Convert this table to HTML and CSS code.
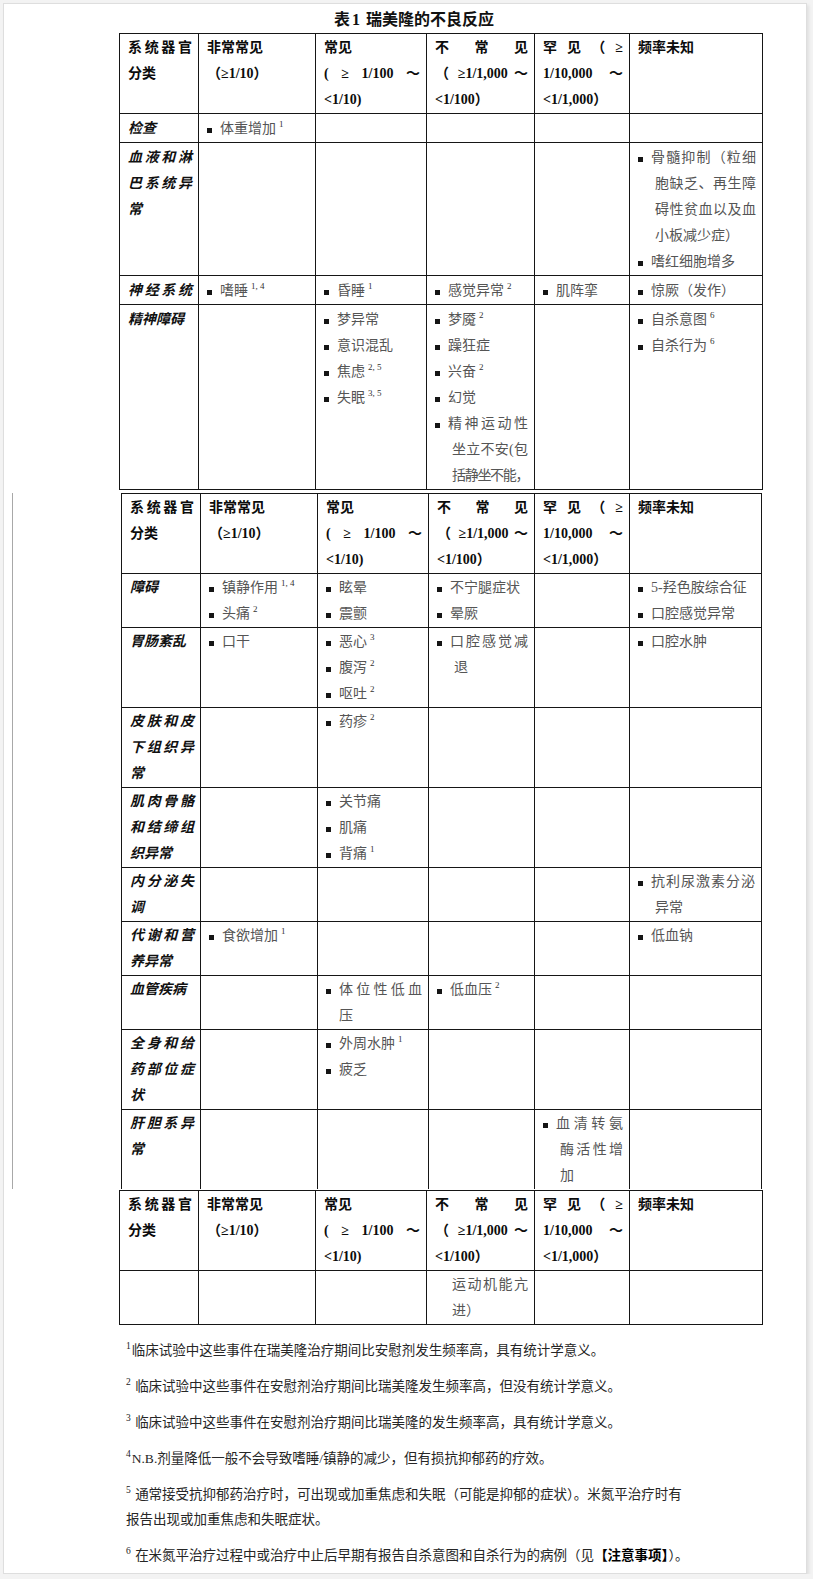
FILE: index.html
```html
<!DOCTYPE html>
<html lang="zh-CN">
<head>
<meta charset="utf-8">
<title>表1 瑞美隆的不良反应</title>
<link rel="stylesheet" href="styles.css">
</head>
<body>
<div class="page">
  <div class="title">表<span class="lat">1</span> 瑞美隆的不良反应</div>

  <table class="tbl t1">
    <colgroup><col class="c1"><col class="c2"><col class="c3"><col class="c4"><col class="c5"><col class="c6"></colgroup>
    <tr class="hd">
      <td><span class="ln j">系统器官</span><span class="ln">分类</span></td>
      <td><span class="ln">非常常见</span><span class="ln">（≥1/10）</span></td>
      <td><span class="ln">常见</span><span class="ln j">( ≥ 1/100 ～</span><span class="ln">&lt;1/10)</span></td>
      <td><span class="ln j">不 常 见</span><span class="ln j">（ ≥1/1,000 ～</span><span class="ln">&lt;1/100）</span></td>
      <td><span class="ln j">罕 见 （ ≥</span><span class="ln j">1/10,000 ～</span><span class="ln">&lt;1/1,000）</span></td>
      <td><span class="ln">频率未知</span></td>
    </tr>
    <tr>
      <td class="cat"><span class="ln">检查</span></td>
      <td><div class="it"><i class="b"></i><div class="t">体重增加<sup>1</sup></div></div></td>
      <td></td><td></td><td></td><td></td>
    </tr>
    <tr>
      <td class="cat"><span class="ln j">血液和淋</span><span class="ln j">巴系统异</span><span class="ln">常</span></td>
      <td></td><td></td><td></td><td></td>
      <td>
        <div class="it"><i class="b"></i><div class="t"><span class="ln j">骨髓抑制（粒细</span><span class="ln j c">胞缺乏、再生障</span><span class="ln j c">碍性贫血以及血</span><span class="ln c">小板减少症）</span></div></div>
        <div class="it"><i class="b"></i><div class="t">嗜红细胞增多</div></div>
      </td>
    </tr>
    <tr>
      <td class="cat"><span class="ln j">神经系统</span></td>
      <td><div class="it"><i class="b"></i><div class="t">嗜睡<sup>1, 4</sup></div></div></td>
      <td><div class="it"><i class="b"></i><div class="t">昏睡<sup>1</sup></div></div></td>
      <td><div class="it"><i class="b"></i><div class="t">感觉异常<sup>2</sup></div></div></td>
      <td><div class="it"><i class="b"></i><div class="t">肌阵挛</div></div></td>
      <td><div class="it"><i class="b"></i><div class="t">惊厥（发作）</div></div></td>
    </tr>
    <tr>
      <td class="cat"><span class="ln">精神障碍</span></td>
      <td></td>
      <td>
        <div class="it"><i class="b"></i><div class="t">梦异常</div></div>
        <div class="it"><i class="b"></i><div class="t">意识混乱</div></div>
        <div class="it"><i class="b"></i><div class="t">焦虑<sup>2, 5</sup></div></div>
        <div class="it"><i class="b"></i><div class="t">失眠<sup>3, 5</sup></div></div>
      </td>
      <td>
        <div class="it"><i class="b"></i><div class="t">梦魇<sup>2</sup></div></div>
        <div class="it"><i class="b"></i><div class="t">躁狂症</div></div>
        <div class="it"><i class="b"></i><div class="t">兴奋<sup>2</sup></div></div>
        <div class="it"><i class="b"></i><div class="t">幻觉</div></div>
        <div class="it"><i class="b"></i><div class="t"><span class="ln j">精神运动性</span><span class="ln j c">坐立不安(包</span><span class="ln j c tight">括静坐不能，</span></div></div>
      </td>
      <td></td>
      <td>
        <div class="it"><i class="b"></i><div class="t">自杀意图<sup>6</sup></div></div>
        <div class="it"><i class="b"></i><div class="t">自杀行为<sup>6</sup></div></div>
      </td>
    </tr>
  </table>

  <div class="sec2">
    <table class="tbl t2">
      <colgroup><col class="c1"><col class="c2"><col class="c3"><col class="c4"><col class="c5"><col class="c6"></colgroup>
      <tr class="hd">
        <td><span class="ln j">系统器官</span><span class="ln">分类</span></td>
        <td><span class="ln">非常常见</span><span class="ln">（≥1/10）</span></td>
        <td><span class="ln">常见</span><span class="ln j">( ≥ 1/100 ～</span><span class="ln">&lt;1/10)</span></td>
        <td><span class="ln j">不 常 见</span><span class="ln j">（ ≥1/1,000 ～</span><span class="ln">&lt;1/100）</span></td>
        <td><span class="ln j">罕 见 （ ≥</span><span class="ln j">1/10,000 ～</span><span class="ln">&lt;1/1,000）</span></td>
        <td><span class="ln">频率未知</span></td>
      </tr>
      <tr>
        <td class="cat"><span class="ln">障碍</span></td>
        <td>
          <div class="it"><i class="b"></i><div class="t">镇静作用<sup>1, 4</sup></div></div>
          <div class="it"><i class="b"></i><div class="t">头痛<sup>2</sup></div></div>
        </td>
        <td>
          <div class="it"><i class="b"></i><div class="t">眩晕</div></div>
          <div class="it"><i class="b"></i><div class="t">震颤</div></div>
        </td>
        <td>
          <div class="it"><i class="b"></i><div class="t">不宁腿症状</div></div>
          <div class="it"><i class="b"></i><div class="t">晕厥</div></div>
        </td>
        <td></td>
        <td>
          <div class="it"><i class="b"></i><div class="t">5-羟色胺综合征</div></div>
          <div class="it"><i class="b"></i><div class="t">口腔感觉异常</div></div>
        </td>
      </tr>
      <tr>
        <td class="cat"><span class="ln">胃肠紊乱</span></td>
        <td><div class="it"><i class="b"></i><div class="t">口干</div></div></td>
        <td>
          <div class="it"><i class="b"></i><div class="t">恶心<sup>3</sup></div></div>
          <div class="it"><i class="b"></i><div class="t">腹泻<sup>2</sup></div></div>
          <div class="it"><i class="b"></i><div class="t">呕吐<sup>2</sup></div></div>
        </td>
        <td><div class="it"><i class="b"></i><div class="t"><span class="ln j">口腔感觉减</span><span class="ln c">退</span></div></div></td>
        <td></td>
        <td><div class="it"><i class="b"></i><div class="t">口腔水肿</div></div></td>
      </tr>
      <tr>
        <td class="cat"><span class="ln j">皮肤和皮</span><span class="ln j">下组织异</span><span class="ln">常</span></td>
        <td></td>
        <td><div class="it"><i class="b"></i><div class="t">药疹<sup>2</sup></div></div></td>
        <td></td><td></td><td></td>
      </tr>
      <tr>
        <td class="cat"><span class="ln j">肌肉骨骼</span><span class="ln j">和结缔组</span><span class="ln">织异常</span></td>
        <td></td>
        <td>
          <div class="it"><i class="b"></i><div class="t">关节痛</div></div>
          <div class="it"><i class="b"></i><div class="t">肌痛</div></div>
          <div class="it"><i class="b"></i><div class="t">背痛<sup>1</sup></div></div>
        </td>
        <td></td><td></td><td></td>
      </tr>
      <tr>
        <td class="cat"><span class="ln j">内分泌失</span><span class="ln">调</span></td>
        <td></td><td></td><td></td><td></td>
        <td><div class="it"><i class="b"></i><div class="t"><span class="ln j">抗利尿激素分泌</span><span class="ln c">异常</span></div></div></td>
      </tr>
      <tr>
        <td class="cat"><span class="ln j">代谢和营</span><span class="ln">养异常</span></td>
        <td><div class="it"><i class="b"></i><div class="t">食欲增加<sup>1</sup></div></div></td>
        <td></td><td></td><td></td>
        <td><div class="it"><i class="b"></i><div class="t">低血钠</div></div></td>
      </tr>
      <tr>
        <td class="cat"><span class="ln">血管疾病</span></td>
        <td></td>
        <td><div class="it"><i class="b"></i><div class="t"><span class="ln j">体位性低血</span><span class="ln">压</span></div></div></td>
        <td><div class="it"><i class="b"></i><div class="t">低血压<sup>2</sup></div></div></td>
        <td></td><td></td>
      </tr>
      <tr>
        <td class="cat"><span class="ln j">全身和给</span><span class="ln j">药部位症</span><span class="ln">状</span></td>
        <td></td>
        <td>
          <div class="it"><i class="b"></i><div class="t">外周水肿<sup>1</sup></div></div>
          <div class="it"><i class="b"></i><div class="t">疲乏</div></div>
        </td>
        <td></td><td></td><td></td>
      </tr>
      <tr class="open">
        <td class="cat"><span class="ln j">肝胆系异</span><span class="ln">常</span></td>
        <td></td><td></td><td></td>
        <td><div class="it"><i class="b"></i><div class="t"><span class="ln j">血清转氨</span><span class="ln j c">酶活性增</span><span class="ln c">加</span></div></div></td>
        <td></td>
      </tr>
    </table>
  </div>

  <table class="tbl t3">
    <colgroup><col class="c1"><col class="c2"><col class="c3"><col class="c4"><col class="c5"><col class="c6"></colgroup>
    <tr class="hd">
      <td><span class="ln j">系统器官</span><span class="ln">分类</span></td>
      <td><span class="ln">非常常见</span><span class="ln">（≥1/10）</span></td>
      <td><span class="ln">常见</span><span class="ln j">( ≥ 1/100 ～</span><span class="ln">&lt;1/10)</span></td>
      <td><span class="ln j">不 常 见</span><span class="ln j">（ ≥1/1,000 ～</span><span class="ln">&lt;1/100）</span></td>
      <td><span class="ln j">罕 见 （ ≥</span><span class="ln j">1/10,000 ～</span><span class="ln">&lt;1/1,000）</span></td>
      <td><span class="ln">频率未知</span></td>
    </tr>
    <tr>
      <td></td><td></td><td></td>
      <td><div class="it"><i class="b nb"></i><div class="t"><span class="ln j c">运动机能亢</span><span class="ln c">进）</span></div></div></td>
      <td></td><td></td>
    </tr>
  </table>

  <div class="notes">
    <p><sup>1</sup>临床试验中这些事件在瑞美隆治疗期间比安慰剂发生频率高，具有统计学意义。</p>
    <p><sup>2</sup> 临床试验中这些事件在安慰剂治疗期间比瑞美隆发生频率高，但没有统计学意义。</p>
    <p><sup>3</sup> 临床试验中这些事件在安慰剂治疗期间比瑞美隆的发生频率高，具有统计学意义。</p>
    <p><sup>4</sup>N.B.剂量降低一般不会导致嗜睡/镇静的减少，但有损抗抑郁药的疗效。</p>
    <p><sup>5</sup> 通常接受抗抑郁药治疗时，可出现或加重焦虑和失眠（可能是抑郁的症状）。米氮平治疗时有<br>报告出现或加重焦虑和失眠症状。</p>
    <p><sup>6</sup> 在米氮平治疗过程中或治疗中止后早期有报告自杀意图和自杀行为的病例（见<b>【注意事项】</b>）。</p>
  </div>
</div>
</body>
</html>
```

FILE: styles.css
```css
html, body {
  margin: 0;
  padding: 0;
}

body {
  background: #f3f3f3;
  font-family: "Liberation Serif", "Noto Sans CJK SC", serif;
  color: #222;
}

.page {
  margin: 3px 6px 0 3px;
  height: 1571px;
  box-sizing: border-box;
  background: #fff;
  border: 1px solid #dedede;
  box-shadow: 2px 2px 3px rgba(0, 0, 0, 0.08);
  overflow: hidden;
}

.title {
  height: 29px;
  line-height: 31px;
  text-align: center;
  padding-left: 18px;
  font-size: 16px;
  font-weight: bold;
  color: #111;
}

.tbl {
  border-collapse: collapse;
  table-layout: fixed;
  width: 643px;
}

.t1,
.t3 {
  margin-left: 115px;
}

.t3 {
  margin-top: 1px;
}

.sec2 {
  margin: 3px 0 0 8px;
  padding-left: 108px;
  border-left: 1px solid #a8a8a8;
}

.t2 {
  width: 640px;
}

.c1 { width: 79px; }
.c2 { width: 117px; }
.c3 { width: 111px; }
.c4 { width: 108px; }
.c5 { width: 95px; }
.c6 { width: 133px; }

.t2 .c4 { width: 106px; }
.t2 .c6 { width: 132px; }

.tbl td {
  border: 1px solid #161616;
  vertical-align: top;
  padding: 1px 6px 0 8px;
  line-height: 26px;
  font-size: 14px;
  color: #555;
}

.t1 tr:not(.hd) td {
  padding-top: 2px;
}

.t2 tr.open td {
  border-bottom: none;
}

.hd td {
  font-weight: bold;
  color: #0c0c0c;
}

td.cat {
  font-weight: bold;
  font-style: italic;
  color: #111;
}

.ln {
  display: block;
  white-space: nowrap;
}

.j {
  text-align: justify;
  text-align-last: justify;
}

.c {
  padding-left: 4px;
}

.tight {
  letter-spacing: -1.5px;
}

.it {
  display: flex;
  align-items: flex-start;
}

.b {
  flex: none;
  width: 5px;
  height: 5px;
  margin: 12px 8px 0 0;
  background: #151515;
}

.b.nb {
  background: transparent;
}

.t {
  flex: 1;
  min-width: 0;
}

sup {
  font-family: "Liberation Serif", serif;
  font-size: 9px;
  line-height: 0;
  vertical-align: 6px;
  margin-left: 3px;
  color: #333;
}

.notes {
  margin-top: 13px;
  padding-left: 122px;
}

.notes p {
  margin: 0 0 11px;
  font-size: 13.5px;
  line-height: 25px;
  color: #262626;
}

.notes sup {
  margin-left: 0;
  margin-right: 1px;
  font-size: 9.5px;
  color: #222;
}

.notes b {
  color: #000;
}

.lat {
  font-family: "Liberation Serif", serif;
  margin: 0 2px;
}
```
